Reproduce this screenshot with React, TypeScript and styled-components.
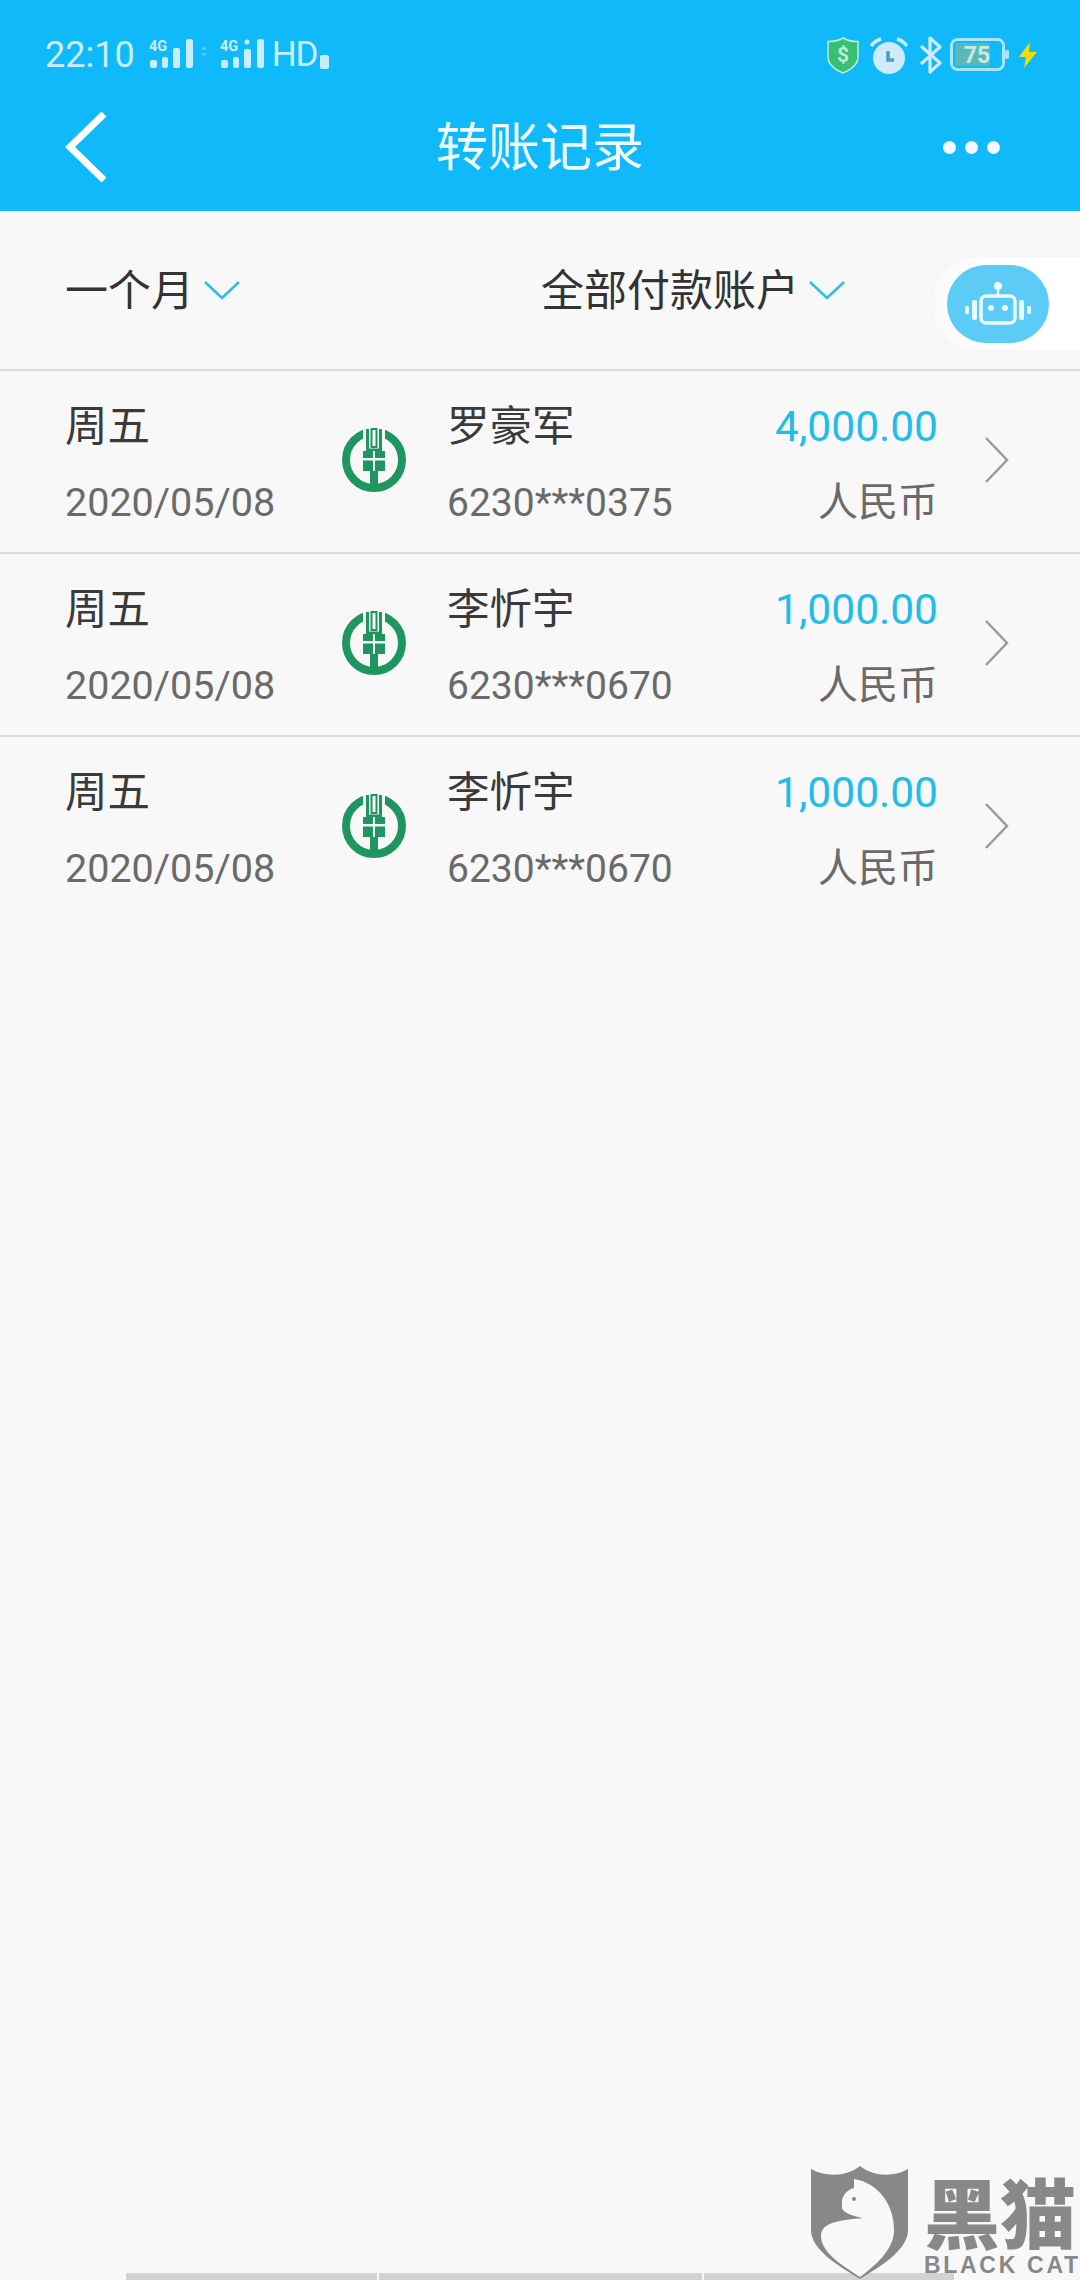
import React from "react";
import styled, { createGlobalStyle } from "styled-components";

const Global = createGlobalStyle`
  html, body { margin: 0; padding: 0; background: #f8f8f8; }
  body { font-family: Roboto, "Noto Sans CJK SC", sans-serif; }
`;

const Page = styled.div`
  position: relative;
  width: 1080px;
  height: 2280px;
  overflow: hidden;
  display: flex;
  flex-direction: column;
  background: #f8f8f8;
`;

const Header = styled.header`
  height: 211px;
  flex: none;
  background: #10b9f9;
  box-sizing: border-box;
  padding-top: 33px;
`;

const StatusBar = styled.div`
  height: 44px;
  display: flex;
  align-items: center;
  justify-content: space-between;
  padding: 0 42px 0 45px;
`;

const StatusGroup = styled.div`
  display: flex;
  align-items: center;
`;

const StatusGap = styled.span<{ $w: number }>`
  flex: none;
  width: ${(p) => p.$w}px;
`;

const Clock = styled.span`
  font-size: 36px;
  line-height: 44px;
  color: #c8eefc;
  margin-right: 14px;
`;

const HdLabel = styled.span`
  font-size: 35px;
  line-height: 44px;
  color: #c8eefc;
  margin-left: 8px;
  letter-spacing: -1px;
`;

const HdSim = styled.span`
  display: inline-block;
  width: 9px;
  height: 14px;
  margin-left: 2px;
  margin-top: 14px;
  border-radius: 2px;
  background: #c8eefc;
`;

const Nav = styled.div`
  height: 134px;
  display: grid;
  grid-template-columns: 1fr auto 1fr;
  align-items: center;
  padding: 6px 65px 0 65px;
  box-sizing: border-box;
`;

const Title = styled.h1`
  margin: 3px 0 0;
  font-size: 52px;
  font-weight: 400;
  line-height: 60px;
  color: #eefaff;
`;

const NavRight = styled.div`
  display: flex;
  justify-content: flex-end;
  margin-right: 15px;
`;

const Dot = styled.span`
  width: 13px;
  height: 13px;
  border-radius: 50%;
  background: #f2fbff;
  margin-left: 9px;
`;

const FilterBar = styled.div`
  position: relative;
  height: 160px;
  flex: none;
  display: flex;
  align-items: center;
  padding: 2px 0 0 65px;
  box-sizing: border-box;
  border-bottom: 2px solid #dcdcdc;
`;

const FilterItem = styled.div<{ $width: number }>`
  width: ${(p) => p.$width}px;
  flex: none;
  display: flex;
  align-items: center;
  font-size: 43px;
  line-height: 56px;
  color: #333;
`;

const Caret = styled.svg`
  width: 38px;
  height: 20px;
  margin-left: 9px;
  margin-top: -2px;
`;

const RobotDock = styled.div`
  position: absolute;
  left: 932px;
  top: 46px;
  width: 160px;
  height: 93px;
  background: linear-gradient(to right, #fafafa, #ffffff 55%);
  border-radius: 46px 0 0 46px;
  box-shadow: 0 0 6px rgba(0, 0, 0, 0.025);
  display: flex;
  align-items: center;
`;

const RobotPill = styled.div`
  width: 102px;
  height: 78px;
  margin-left: 15px;
  border-radius: 39px;
  background: #5ccbf6;
  display: flex;
  align-items: center;
  justify-content: center;
`;

const Row = styled.div<{ $last?: boolean }>`
  height: 183px;
  flex: none;
  box-sizing: border-box;
  padding: 0 70px 0 65px;
  display: flex;
  align-items: center;
  border-bottom: 2px solid ${(p) => (p.$last ? "transparent" : "#dcdcdc")};
`;

const DateCol = styled.div`
  width: 277px;
  flex: none;
  padding-top: 6px;
`;

const InfoCol = styled.div`
  flex: 1;
  margin-left: 41px;
  padding-top: 6px;
`;

const AmountCol = styled.div`
  text-align: right;
  padding-top: 6px;
`;

const Primary = styled.div`
  font-size: 42.5px;
  line-height: 56px;
  height: 56px;
  color: #3a3a3a;
  white-space: nowrap;
`;

const Secondary = styled.div<{ $size?: number }>`
  font-size: ${(p) => p.$size ?? 40}px;
  line-height: 56px;
  height: 56px;
  margin-top: 20px;
  color: #6a6a6a;
  white-space: nowrap;
`;

const Amount = styled(Primary)`
  color: #21bde6;
`;

const BankLogo = styled.svg`
  width: 64px;
  height: 64px;
  flex: none;
  margin-top: -3px;
`;

const RowArrow = styled.svg`
  width: 26px;
  height: 48px;
  flex: none;
  margin: -3px 0 0 46px;
`;

const Spacer = styled.div`
  flex: 1;
`;

const BottomBar = styled.div`
  height: 7px;
  margin: 0 126px 0 126px;
  display: grid;
  grid-template-columns: 251px 323px 1fr;
  gap: 2px;
`;

const BottomSegment = styled.span`
  background: #d2d2d2;
`;

const Watermark = styled.div`
  position: absolute;
  left: 811px;
  top: 2166px;
  display: flex;
  align-items: flex-start;
`;

const WatermarkText = styled.div`
  margin-left: 15px;
  display: flex;
  flex-direction: column;
  color: #888;
`;

const WatermarkCn = styled.span`
  font-family: "Noto Sans CJK SC", sans-serif;
  font-weight: 900;
  font-size: 76px;
  line-height: 82px;
  height: 82px;
  margin-top: 3px;
  white-space: nowrap;
`;

const WatermarkEn = styled.span`
  font-family: "Liberation Sans", sans-serif;
  font-weight: 700;
  font-size: 23px;
  line-height: 26px;
  letter-spacing: 2.7px;
  margin-top: 1px;
  white-space: nowrap;
`;

const Signal = ({ roaming = false }: { roaming?: boolean }) => (
  <svg width="44" height="32" viewBox="0 0 44 32" fill="#c8eefc">
    <text x="0" y="12" fontSize="14.5" fontWeight="700" fontFamily="Roboto, sans-serif">4G</text>
    <rect x="1" y="21" width="7" height="8" rx="2" />
    <rect x="13" y="18" width="6" height="11" rx="2" />
    <rect x="24" y={roaming ? 10 : 9} width="7" height={roaming ? 19 : 20} rx="2" />
    {roaming && <circle cx="27" cy="3" r="2.5" />}
    <rect x="37" y="0" width="7" height="29" rx="2" />
  </svg>
);

const ActivityArrows = () => (
  <svg width="27" height="32" viewBox="0 0 27 32" fill="#c8eefc" opacity="0.35">
    <path d="M8 11 L11 7 L14 11Z" />
    <path d="M8 14 L14 14 L11 18Z" />
  </svg>
);

const ShieldIcon = () => (
  <svg width="32" height="37" viewBox="0 0 32 37">
    <path d="M16 1 C20 3.5 26 4.5 31 4.5 V20 C31 28 23 33 16 36 C9 33 1 28 1 20 V4.5 C6 4.5 12 3.5 16 1Z" fill="#37bf72" stroke="#bdeee0" strokeWidth="1.5" />
    <text x="16" y="25" textAnchor="middle" fontSize="21" fontWeight="700" fill="#bdeed4" fontFamily="Roboto, sans-serif">$</text>
  </svg>
);

const AlarmIcon = () => (
  <svg width="38" height="37" viewBox="0 0 38 37">
    <circle cx="19" cy="21" r="16" fill="#cfeafb" />
    <path d="M1 9 C4 5 7 3 11 2 M37 9 C34 5 31 3 27 2" stroke="#cfeafb" strokeWidth="3.5" fill="none" />
    <path d="M18 14 V23 H24" stroke="#4a9dc8" strokeWidth="3.5" fill="none" />
  </svg>
);

const BluetoothIcon = () => (
  <svg width="24" height="38" viewBox="0 0 24 38">
    <path d="M2 10 L21 27 L11 36 V2 L21 11 L2 28" stroke="#cdebfb" strokeWidth="3.2" fill="none" strokeLinejoin="round" />
  </svg>
);

const BatteryIcon = () => (
  <svg width="60" height="34" viewBox="0 0 60 34">
    <rect x="1.5" y="1.5" width="52" height="30" rx="6" fill="none" stroke="#a8e4f5" strokeWidth="3" />
    <rect x="5" y="5" width="35" height="23" fill="#5ab9b8" />
    <rect x="55" y="12" width="4" height="9" rx="1.5" fill="#a8e4f5" />
    <text x="27" y="25" textAnchor="middle" fontSize="23" fontWeight="700" fill="#c5ebe8" fontFamily="Roboto, sans-serif">75</text>
  </svg>
);

const BoltIcon = () => (
  <svg width="20" height="26" viewBox="0 0 20 26">
    <path d="M12 0 L1 15 H8 L6 26 L19 10 H11Z" fill="#f2dc12" />
  </svg>
);

const BackSvg = styled.svg`
  display: block;
  width: 42px;
  height: 72px;
`;

const BackIcon = () => (
  <BackSvg viewBox="0 0 42 72">
    <path d="M39 3 L5 36 L39 69" fill="none" stroke="#fff" strokeWidth="7" />
  </BackSvg>
);

const RobotIcon = () => (
  <svg width="68" height="44" viewBox="0 0 68 44" fill="none">
    <circle cx="34" cy="4" r="4" fill="#eafaff" />
    <path d="M34 8 V13" stroke="#eafaff" strokeWidth="2.5" />
    <rect x="17" y="14" width="34" height="27" rx="5" stroke="#eafaff" strokeWidth="3.5" />
    <circle cx="27" cy="26" r="3" fill="#eafaff" />
    <circle cx="41" cy="26" r="3" fill="#eafaff" />
    <rect x="8" y="18" width="5" height="20" rx="2" fill="#eafaff" />
    <rect x="55" y="18" width="5" height="20" rx="2" fill="#eafaff" />
    <rect x="1" y="24" width="4" height="8" rx="1.5" fill="#eafaff" />
    <rect x="63" y="24" width="4" height="8" rx="1.5" fill="#eafaff" />
  </svg>
);

const AbcLogo = () => (
  <BankLogo viewBox="0 0 64 64">
    <circle cx="32" cy="32" r="28" fill="none" stroke="#1f9660" strokeWidth="8" />
    <rect x="21" y="0" width="22" height="24" fill="#f8f8f8" />
    <path d="M25.5 1 V22 H38.5 V1" fill="none" stroke="#1f9660" strokeWidth="3" />
    <rect x="29.5" y="1" width="5" height="18" fill="none" stroke="#1f9660" strokeWidth="2" />
    <rect x="21" y="23" width="22" height="20" fill="#1f9660" />
    <rect x="21" y="30" width="22" height="2.5" fill="#f8f8f8" />
    <rect x="31" y="23" width="2" height="20" fill="#f8f8f8" />
    <rect x="28" y="43" width="8" height="20" fill="#1f9660" />
  </BankLogo>
);

const CatShield = () => (
  <svg width="98" height="114" viewBox="0 0 98 114">
    <path d="M0 3 C14 11 36 11 49 0 C62 11 84 11 97 3 V64 C97 84 70 100 49 113 C28 100 0 84 0 64Z" fill="#888" />
    <path d="M43 13 C68 17 84 40 83 66 C82 84 64 100 49 111 C36 102 10 88 10 70 C10 56 30 54 52 52 C38 50 30 44 31 41 L31 37 C30 33 34 24 43 22Z" fill="#f8f8f8" />
    <circle cx="43" cy="33" r="2" fill="#888" />
  </svg>
);

const transfers = [
  { name: "罗豪军", card: "6230***0375", amount: "4,000.00" },
  { name: "李忻宇", card: "6230***0670", amount: "1,000.00" },
  { name: "李忻宇", card: "6230***0670", amount: "1,000.00" },
];

const CaretIcon = () => (
  <Caret viewBox="0 0 38 20">
    <path d="M2 2 L19 18 L36 2" fill="none" stroke="#2dbde8" strokeWidth="2.5" />
  </Caret>
);

export default function App() {
  return (
    <Page>
      <Global />
      <Header>
        <StatusBar>
          <StatusGroup>
            <Clock>22:10</Clock>
            <Signal />
            <ActivityArrows />
            <Signal roaming />
            <HdLabel>HD</HdLabel>
            <HdSim />
          </StatusGroup>
          <StatusGroup>
            <ShieldIcon />
            <StatusGap $w={11} />
            <AlarmIcon />
            <StatusGap $w={11} />
            <BluetoothIcon />
            <StatusGap $w={7} />
            <BatteryIcon />
            <StatusGap $w={8} />
            <BoltIcon />
          </StatusGroup>
        </StatusBar>
        <Nav>
          <BackIcon />
          <Title>转账记录</Title>
          <NavRight>
            <Dot />
            <Dot />
            <Dot />
          </NavRight>
        </Nav>
      </Header>
      <FilterBar>
        <FilterItem $width={476}>
          一个月
          <CaretIcon />
        </FilterItem>
        <FilterItem $width={400}>
          全部付款账户
          <CaretIcon />
        </FilterItem>
        <RobotDock>
          <RobotPill>
            <RobotIcon />
          </RobotPill>
        </RobotDock>
      </FilterBar>
      {transfers.map((t, i) => (
        <Row key={i} $last={i === transfers.length - 1}>
          <DateCol>
            <Primary>周五</Primary>
            <Secondary $size={39.5}>2020/05/08</Secondary>
          </DateCol>
          <AbcLogo />
          <InfoCol>
            <Primary>{t.name}</Primary>
            <Secondary $size={39}>{t.card}</Secondary>
          </InfoCol>
          <AmountCol>
            <Amount>{t.amount}</Amount>
            <Secondary>人民币</Secondary>
          </AmountCol>
          <RowArrow viewBox="0 0 26 48">
            <path d="M2 2 L23 24 L2 46" fill="none" stroke="#9a9a9a" strokeWidth="2.5" />
          </RowArrow>
        </Row>
      ))}
      <Spacer />
      <BottomBar>
        <BottomSegment />
        <BottomSegment />
        <BottomSegment />
      </BottomBar>
      <Watermark>
        <CatShield />
        <WatermarkText>
          <WatermarkCn>黑猫</WatermarkCn>
          <WatermarkEn>BLACK CAT</WatermarkEn>
        </WatermarkText>
      </Watermark>
    </Page>
  );
}
